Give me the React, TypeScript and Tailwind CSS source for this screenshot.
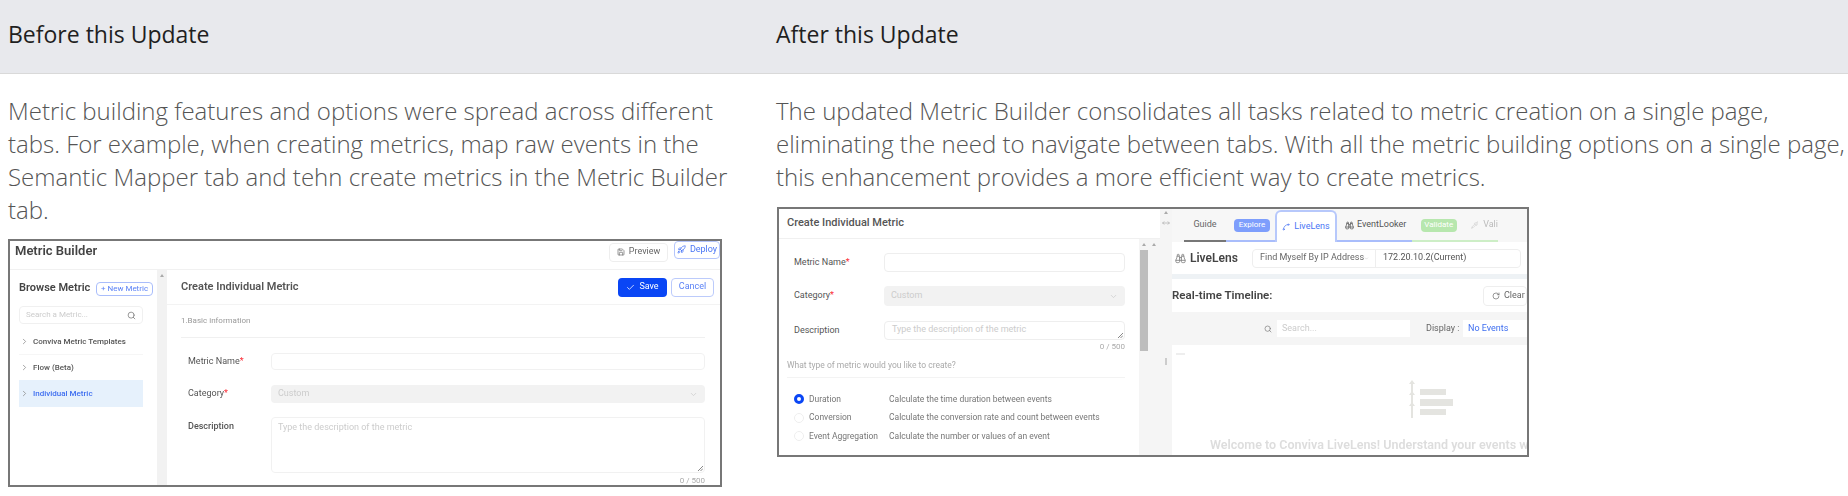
import { Binoculars, Check, ChevronDown, ChevronRight, MoveHorizontal, Pipette, RotateCw, Rocket, Save, Search, Spline } from "lucide-react";

function Field({ label, required, children, className }: { label: string; required?: boolean; children: React.ReactNode; className: string }) {
  return (
    <div className={`flex items-center ${className}`}>
      <span className="text-[#555] whitespace-nowrap">
        {label}
        {required && <span className="text-red-500">*</span>}
      </span>
      {children}
    </div>
  );
}

function ScrollArrow({ className }: { className?: string }) {
  return <div className={`w-0 h-0 border-x-[2px] border-b-[3px] border-x-transparent border-b-[#aaa] ${className ?? ""}`} />;
}

function ResizeGrip() {
  return (
    <svg className="self-end" width="5" height="5" viewBox="0 0 5 5" stroke="#888" fill="none">
      <path d="M0 5L5 0M2.5 5L5 2.5" />
    </svg>
  );
}

function BeforeShot() {
  return (
    <div className="w-[714px] h-[248px] border-2 border-[#777] bg-white overflow-hidden">
      <div className="h-full blur-[0.6px] font-['Roboto',sans-serif] text-[9px] flex flex-col">
        {/* Title bar */}
        <div className="h-[29px] flex items-center justify-between border-b border-[#f1f1f1] shrink-0">
          <span className="pl-[5px] pb-[9px] text-[13px] font-semibold text-[#444]">Metric Builder</span>
          <div className="flex items-start gap-[6px] pb-[8px]">
            <div className="w-[59px] h-[19px] mt-[2px] border border-[#eee] rounded-sm flex items-center justify-center gap-1 text-[#666]">
              <Save className="w-[8px] h-[8px]" />
              Preview
            </div>
            <div className="w-[46px] h-[18px] border border-[#b4c5fb] rounded-sm flex items-center justify-center gap-1 text-[#4a76f5]">
              <Rocket className="w-[9px] h-[9px]" />
              Deploy
            </div>
          </div>
        </div>
        <div className="flex-1 flex min-h-0">
          {/* Sidebar */}
          <div className="w-[147px] shrink-0 pl-[9px] pr-[4px] pt-[11px]">
            <div className="flex items-center justify-between h-[15px]">
              <span className="text-[11px] font-semibold text-[#444]">Browse Metric</span>
              <span className="w-[57px] h-[14px] border border-[#a9bdfb] rounded-sm text-[8px] text-[#5b82f6] flex items-center justify-center">+ New Metric</span>
            </div>
            <div className="w-[124px] h-[18px] mt-[10px] border border-[#f0f0f0] rounded-sm flex items-center justify-between px-[6px] text-[#ccc] text-[8px]">
              Search a Metric...
              <Search className="w-[9px] h-[9px] text-[#777]" />
            </div>
            <div className="w-[124px] h-[26px] mt-[5px] flex items-center gap-[4px] pl-[1px] font-medium text-[8px] text-[#555] border-b border-[#f6f6f6] whitespace-nowrap">
              <ChevronRight className="w-[9px] h-[9px] text-[#888]" />
              Conviva Metric Templates
            </div>
            <div className="w-[124px] h-[25px] flex items-center gap-[4px] pl-[1px] font-medium text-[8px] text-[#555]">
              <ChevronRight className="w-[9px] h-[9px] text-[#888]" />
              Flow (Beta)
            </div>
            <div className="w-[124px] h-[27px] bg-[#e6f1fc] flex items-center gap-[4px] pl-[1px] font-medium text-[8px] text-[#3f6ff0]">
              <ChevronRight className="w-[9px] h-[9px] text-[#888]" />
              Individual Metric
            </div>
          </div>
          <div className="w-[10px] bg-[#f2f2f2] shrink-0 pt-[4px] flex flex-col items-center">
            <ScrollArrow />
          </div>
          {/* Form */}
          <div className="flex-1 min-w-0">
            <div className="h-[35px] flex items-center justify-between border-b border-[#f3f3f3] pl-[14px] pr-[6px]">
              <span className="text-[11px] font-semibold text-[#555]">Create Individual Metric</span>
              <div className="flex gap-[4px]">
                <span className="w-[49px] h-[19px] rounded-sm bg-[#0a46f5] text-white flex items-center justify-center gap-1">
                  <Check className="w-[9px] h-[9px]" />
                  Save
                </span>
                <span className="w-[43px] h-[19px] rounded-sm border border-[#bccbfb] text-[#5b82f6] flex items-center justify-center">Cancel</span>
              </div>
            </div>
            <div className="pl-[14px] pr-[15px]">
              <div className="h-[33px] flex items-center border-b border-[#f0f0f0] text-[8px] text-[#999]">1.Basic information</div>
              <Field label="Metric Name" required className="pl-[7px] mt-[15px]">
                <div className="ml-auto w-[434px] h-[17px] border border-[#f1f1f1] rounded-sm" />
              </Field>
              <Field label="Category" required className="pl-[7px] mt-[15px]">
                <div className="ml-auto w-[434px] h-[18px] bg-[#f2f2f2] rounded-sm flex items-center justify-between px-[7px] text-[#ccc]">
                  Custom
                  <ChevronDown className="w-[9px] h-[9px]" />
                </div>
              </Field>
              <div className="flex mt-[14px] pl-[7px]">
                <span className="text-[#555] font-medium pt-[3px]">Description</span>
                <div className="ml-auto w-[434px] h-[56px] border border-[#f1f1f1] rounded-sm pl-[6px] pr-[1px] py-[3px] pb-[1px] text-[#ccc] flex justify-between">
                  Type the description of the metric
                  <ResizeGrip />
                </div>
              </div>
              <div className="text-right text-[#aaa] text-[8px] mt-[2px]">0 / 500</div>
            </div>
          </div>
        </div>
      </div>
    </div>
  );
}

function RadioRow({ label, desc, checked }: { label: string; desc: string; checked?: boolean }) {
  return (
    <div className="flex items-center h-[18.5px] text-[8.5px] text-[#777] whitespace-nowrap">
      <span className={`w-[10px] h-[10px] rounded-full shrink-0 ${checked ? "border-[3px] border-[#0a46f5]" : "border border-[#eee]"}`} />
      <span className="w-[85px] pl-[5px] shrink-0">{label}</span>
      <span>{desc}</span>
    </div>
  );
}

function AfterShot() {
  return (
    <div className="w-[752px] h-[250px] border-2 border-[#777] bg-white overflow-hidden">
      <div className="h-full blur-[0.6px] font-['Roboto',sans-serif] text-[9px] flex">
        {/* Left form panel with gutter */}
        <div className="w-[393px] shrink-0 flex flex-col bg-[#f5f5f5]">
          <div className="h-[30px] flex shrink-0">
            <div className="w-[381px] bg-white border-b border-[#f0f0f0] flex items-center pl-[8px] text-[11px] font-medium text-[#555]">Create Individual Metric</div>
            <div className="flex-1 flex flex-col items-center pt-[2px] gap-[5px]">
              <ScrollArrow />
              <MoveHorizontal className="w-[10px] h-[8px] text-[#aaa]" />
            </div>
          </div>
          <div className="flex-1 flex min-h-0">
            <div className="w-[360px] bg-white pl-[8px] pr-[14px] pt-[14px] shrink-0">
              <Field label="Metric Name" required className="pl-[7px] h-[19px]">
                <div className="ml-auto w-[241px] h-[19px] border border-[#eee] rounded-sm" />
              </Field>
              <Field label="Category" required className="pl-[7px] h-[20px] mt-[14px]">
                <div className="ml-auto w-[241px] h-[20px] bg-[#f2f2f2] rounded-sm flex items-center justify-between px-[7px] text-[#ccc]">
                  Custom
                  <ChevronDown className="w-[9px] h-[9px]" />
                </div>
              </Field>
              <Field label="Description" className="pl-[7px] h-[19px] mt-[15px]">
                <div className="ml-auto w-[241px] h-[19px] border border-[#eee] rounded-sm pl-[7px] pr-[1px] pb-[1px] flex items-center justify-between text-[#ccc]">
                  Type the description of the metric
                  <ResizeGrip />
                </div>
              </Field>
              <div className="text-right text-[#aaa] text-[8px] leading-[10px] mt-[2px]">0 / 500</div>
              <div className="h-[25px] mt-[1px] flex items-center text-[#aaa] border-b border-[#f3f3f3] text-[8.5px]">What type of metric would you like to create?</div>
              <div className="mt-[12px] pl-[7px]">
                <RadioRow checked label="Duration" desc="Calculate the time duration between events" />
                <RadioRow label="Conversion" desc="Calculate the conversion rate and count between events" />
                <RadioRow label="Event Aggregation" desc="Calculate the number or values of an event" />
              </div>
            </div>
            <div className="w-[10px] shrink-0 pt-[4px] px-[1px] flex flex-col items-center gap-[4px]">
              <ScrollArrow />
              <div className="w-full h-[101px] bg-[#bdbdbd]" />
            </div>
            <div className="w-[23px] shrink-0 pt-[4px] pl-[3px] pr-[5px] flex flex-col">
              <ScrollArrow />
              <div className="w-[2px] h-[7px] bg-[#ccc] mt-[112px] ml-auto" />
            </div>
          </div>
        </div>
        {/* LiveLens panel */}
        <div className="flex-1 min-w-0 flex flex-col overflow-hidden">
          <div className="h-[33px] bg-[#f7f7f7] flex items-end pl-[12px] shrink-0 whitespace-nowrap">
            <div className="w-[42px] h-[32px] border-b-2 border-[#777] flex items-center justify-center text-[#666]">Guide</div>
            <div className="w-[49px] h-[32px] border-b-2 border-[#a9bdfb] flex items-center justify-end pr-[5px]">
              <span className="w-[36px] h-[13px] rounded-sm bg-[#7e9efc] text-white text-[8px] flex items-center justify-center">Explore</span>
            </div>
            <div className="w-[62px] h-[32px] bg-white border-2 border-b-0 border-[#b7c8fb] rounded-t-md flex items-center justify-center gap-[4px] text-[#4a76f5]">
              <Spline className="w-[8px] h-[8px]" />
              LiveLens
            </div>
            <div className="w-[75px] h-[32px] border-b-2 border-[#a9bdfb] flex items-center pl-[8px] gap-[3px] text-[#555]">
              <Binoculars className="w-[9px] h-[9px]" />
              EventLooker
            </div>
            <div className="w-[86px] h-[32px] border-b-2 border-[#cdeec6] flex items-center pl-[9px] text-[#bbb]">
              <span className="w-[37px] h-[13px] rounded-sm bg-[#b7e7ae] text-white text-[8px] flex items-center justify-center">Validate</span>
              <Pipette className="w-[8px] h-[8px] ml-[14px] text-[#ccc]" />
              <span className="ml-[5px]">Vali</span>
            </div>
          </div>
          <div className="h-[32px] flex items-center pl-[3px] shrink-0 whitespace-nowrap">
            <Binoculars className="w-[11px] h-[11px] text-[#888]" />
            <span className="ml-[4px] text-[12px] font-semibold text-[#444] w-[62px]">LiveLens</span>
            <div className="w-[269px] h-[19px] border border-[#eee] rounded-sm flex items-center shrink-0">
              <span className="w-[122px] pl-[7px] pr-[6px] text-[#666] flex items-center justify-between">
                Find Myself By IP Address
                <ChevronDown className="w-[7px] h-[7px] text-[#bbb]" />
              </span>
              <span className="h-full pl-[7px] border-l border-[#eee] text-[#555] flex items-center">172.20.10.2(Current)</span>
            </div>
          </div>
          <div className="h-[5px] bg-[#eef2f5] shrink-0" />
          <div className="h-[33px] flex items-center justify-between shrink-0 whitespace-nowrap">
            <span className="text-[11.5px] font-semibold text-[#444]">Real-time Timeline:</span>
            <span className="w-[44px] h-[20px] border border-[#eee] rounded-sm flex items-center gap-[4px] pl-[8px] text-[#666]">
              <RotateCw className="w-[8px] h-[8px]" />
              Clear
            </span>
          </div>
          <div className="h-[33px] bg-[#f5f5f5] flex items-center pl-[87px] shrink-0 whitespace-nowrap">
            <span className="w-[18px] h-[17px] flex items-center justify-center">
              <Search className="w-[8px] h-[8px] text-[#777]" />
            </span>
            <span className="w-[133px] h-[17px] bg-white flex items-center pl-[5px] text-[#ccc]">Search...</span>
            <span className="w-[53px] pl-[16px] text-[#666]">Display :</span>
            <span className="flex-1 h-[17px] bg-white flex items-center pl-[5px] text-[#3f6ff0]">No Events</span>
          </div>
          <div className="flex-1 flex flex-col pt-[8px] min-h-0 whitespace-nowrap">
            <div className="w-[9px] h-[3px] ml-[4px] bg-[#eee]" />
            <svg className="ml-[236px] mt-[25px] shrink-0" width="46" height="40" viewBox="0 0 46 40" fill="#e4e4e0">
              <rect x="3" y="2" width="2" height="36" />
              <path d="M4 0l3 4H1zM4 11l3 4H1zM4 22l3 4H1z" />
              <rect x="12" y="9" width="26" height="6" />
              <rect x="12" y="19" width="33" height="7" />
              <rect x="12" y="29" width="26" height="6" />
            </svg>
            <div className="ml-[38px] mt-[16px] text-[12.5px] font-semibold text-[#ddd]">Welcome to Conviva LiveLens! Understand your events when they happen</div>
          </div>
        </div>
      </div>
    </div>
  );
}

export default function App() {
  return (
    <div className="w-[1848px] h-[496px] bg-white overflow-hidden font-['Open_Sans',sans-serif] grid grid-cols-[768px_1fr] grid-rows-[74px_1fr]">
      <div className="bg-[#e8e9ed] border-b border-[#d9d9d9] pl-[8px] pb-[5px] flex items-center text-[23px] text-[#1f1f1f]">Before this Update</div>
      <div className="bg-[#e8e9ed] border-b border-[#d9d9d9] pl-[8px] pb-[5px] flex items-center text-[23px] text-[#1f1f1f]">After this Update</div>
      <div className="pl-[8px] pt-[20px]">
        <p className="w-[730px] text-[24px] leading-[33px] font-light text-[#555]">
          Metric building features and options were spread across different tabs. For example, when creating metrics, map raw events in the Semantic Mapper tab and tehn create metrics in the Metric Builder tab.
        </p>
        <div className="mt-[13px]">
          <BeforeShot />
        </div>
      </div>
      <div className="pl-[8px] pt-[20px]">
        <p className="text-[24px] leading-[33px] font-light text-[#555] whitespace-nowrap">
          The updated Metric Builder consolidates all tasks related to metric creation on a single page,
          <br />
          eliminating the need to navigate between tabs. With all the metric building options on a single page,
          <br />
          this enhancement provides a more efficient way to create metrics.
        </p>
        <div className="mt-[14px] ml-[1px]">
          <AfterShot />
        </div>
      </div>
    </div>
  );
}
